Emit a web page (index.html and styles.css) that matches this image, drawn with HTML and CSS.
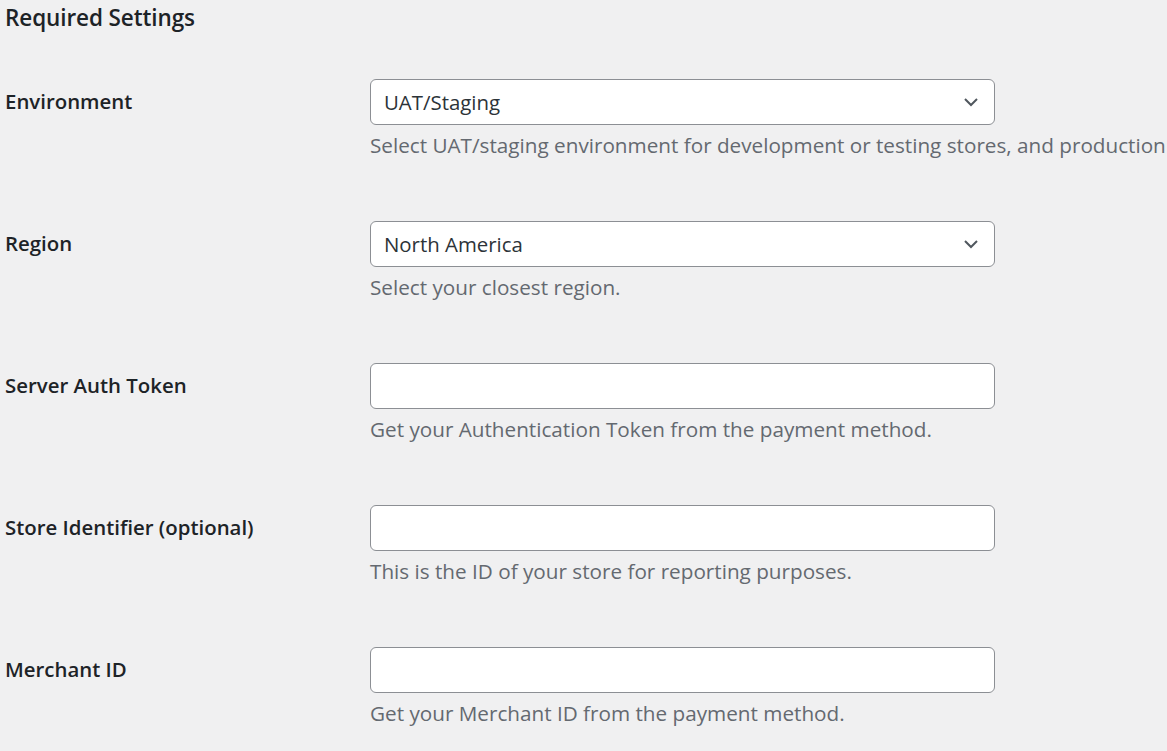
FILE: index.html
```html
<!DOCTYPE html>
<html>
<head>
<meta charset="utf-8">
<link rel="stylesheet" href="styles.css">
</head>
<body>
<div class="page">
  <h2 class="title">Required Settings</h2>
  <div class="rows">
    <div class="row">
      <div class="label">Environment</div>
      <div class="field">
        <div class="select"><span>UAT/Staging</span><svg class="chev" width="16" height="10" viewBox="0 0 16 10"><path d="M2 2 L8 8 L14 2" fill="none" stroke="#50575e" stroke-width="2"/></svg></div>
        <p class="desc nowrap">Select UAT/staging environment for development or testing stores, and production</p>
      </div>
    </div>
    <div class="row">
      <div class="label">Region</div>
      <div class="field">
        <div class="select"><span>North America</span><svg class="chev" width="16" height="10" viewBox="0 0 16 10"><path d="M2 2 L8 8 L14 2" fill="none" stroke="#50575e" stroke-width="2"/></svg></div>
        <p class="desc">Select your closest region.</p>
      </div>
    </div>
    <div class="row">
      <div class="label">Server Auth Token</div>
      <div class="field">
        <div class="input"></div>
        <p class="desc">Get your Authentication Token from the payment method.</p>
      </div>
    </div>
    <div class="row">
      <div class="label">Store Identifier (optional)</div>
      <div class="field">
        <div class="input"></div>
        <p class="desc">This is the ID of your store for reporting purposes.</p>
      </div>
    </div>
    <div class="row">
      <div class="label">Merchant ID</div>
      <div class="field">
        <div class="input"></div>
        <p class="desc">Get your Merchant ID from the payment method.</p>
      </div>
    </div>
  </div>
</div>
</body>
</html>
```
FILE: styles.css
```css
html, body {
  margin: 0;
  padding: 0;
  background: #f0f0f1;
  overflow: hidden;
}
.page {
  box-sizing: border-box;
  height: 751px;
  padding: 4px 0 0 5px;
  font-family: "Open Sans", "Noto Sans", sans-serif;
  color: #1d2327;
  width: 1167px;
  overflow: hidden;
}
.title {
  margin: 0;
  font-size: 22.5px;
  line-height: 28px;
  font-weight: 600;
  letter-spacing: -0.1px;
}
.rows {
  display: flex;
  flex-direction: column;
  padding-top: 47px;
}
.row {
  display: grid;
  grid-template-columns: 365px 625px;
  height: 142px;
  flex: none;
  align-items: start;
}
.label {
  font-size: 20.4px;
  font-weight: 600;
  line-height: 44px;
}
.field {
  display: flex;
  flex-direction: column;
}
.select, .input {
  box-sizing: border-box;
  height: 46px;
  width: 625px;
  background: #fff;
  border: 1px solid #8c8f94;
  border-radius: 6px;
}
.select {
  display: flex;
  align-items: center;
  justify-content: space-between;
  padding: 0 15px 0 13px;
  font-size: 20.4px;
  color: #2c3338;
}
.chev {
  display: block;
}
.desc {
  margin: 7px 0 0;
  font-size: 20.7px;
  line-height: 27px;
  color: #646970;
}
.nowrap {
  white-space: nowrap;
}
```
